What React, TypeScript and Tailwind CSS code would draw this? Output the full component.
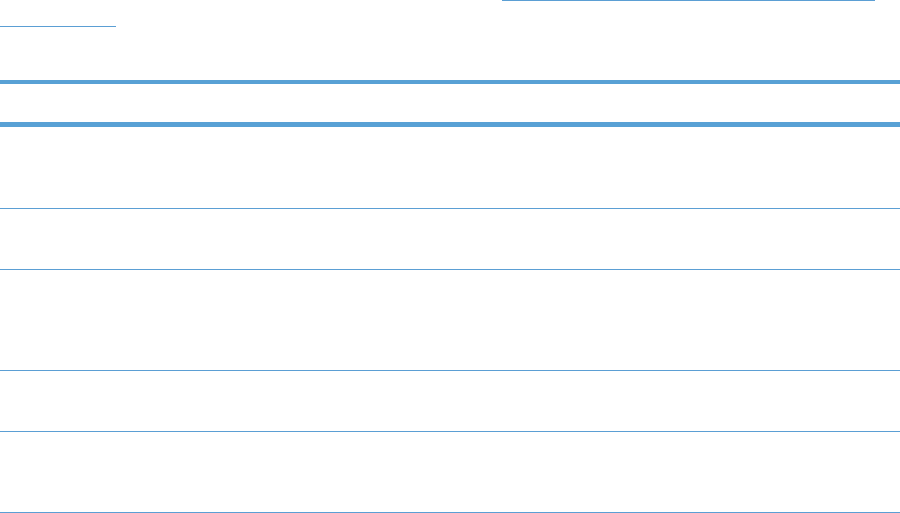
import React from 'react';

const rows = [81, 60, 100, 60, 80];

const App: React.FC = () => {
  return (
    <div className="w-[900px] h-[513px] bg-white overflow-hidden font-['Liberation_Sans',sans-serif]">
      {/* wrapped link underlines, text itself off-frame */}
      <div className="flex h-px">
        <div className="ml-[502px] w-[373px] bg-[#5b9fd4]" />
      </div>
      <div className="flex h-px mt-[25px]">
        <div className="w-[116px] bg-[#5b9fd4]" />
      </div>
      <div className="mt-[53px] flex flex-col">
        <div className="h-[4px] bg-[#58a1d5]" />
        <div className="h-[38px]" />
        <div className="h-[5px] bg-[#58a1d5]" />
        {rows.map((h, i) => (
          <React.Fragment key={i}>
            <div className="shrink-0" style={{ height: h }} />
            <div className="h-px shrink-0 bg-[#5b9fd4]" />
          </React.Fragment>
        ))}
      </div>
    </div>
  );
};

export default App;
